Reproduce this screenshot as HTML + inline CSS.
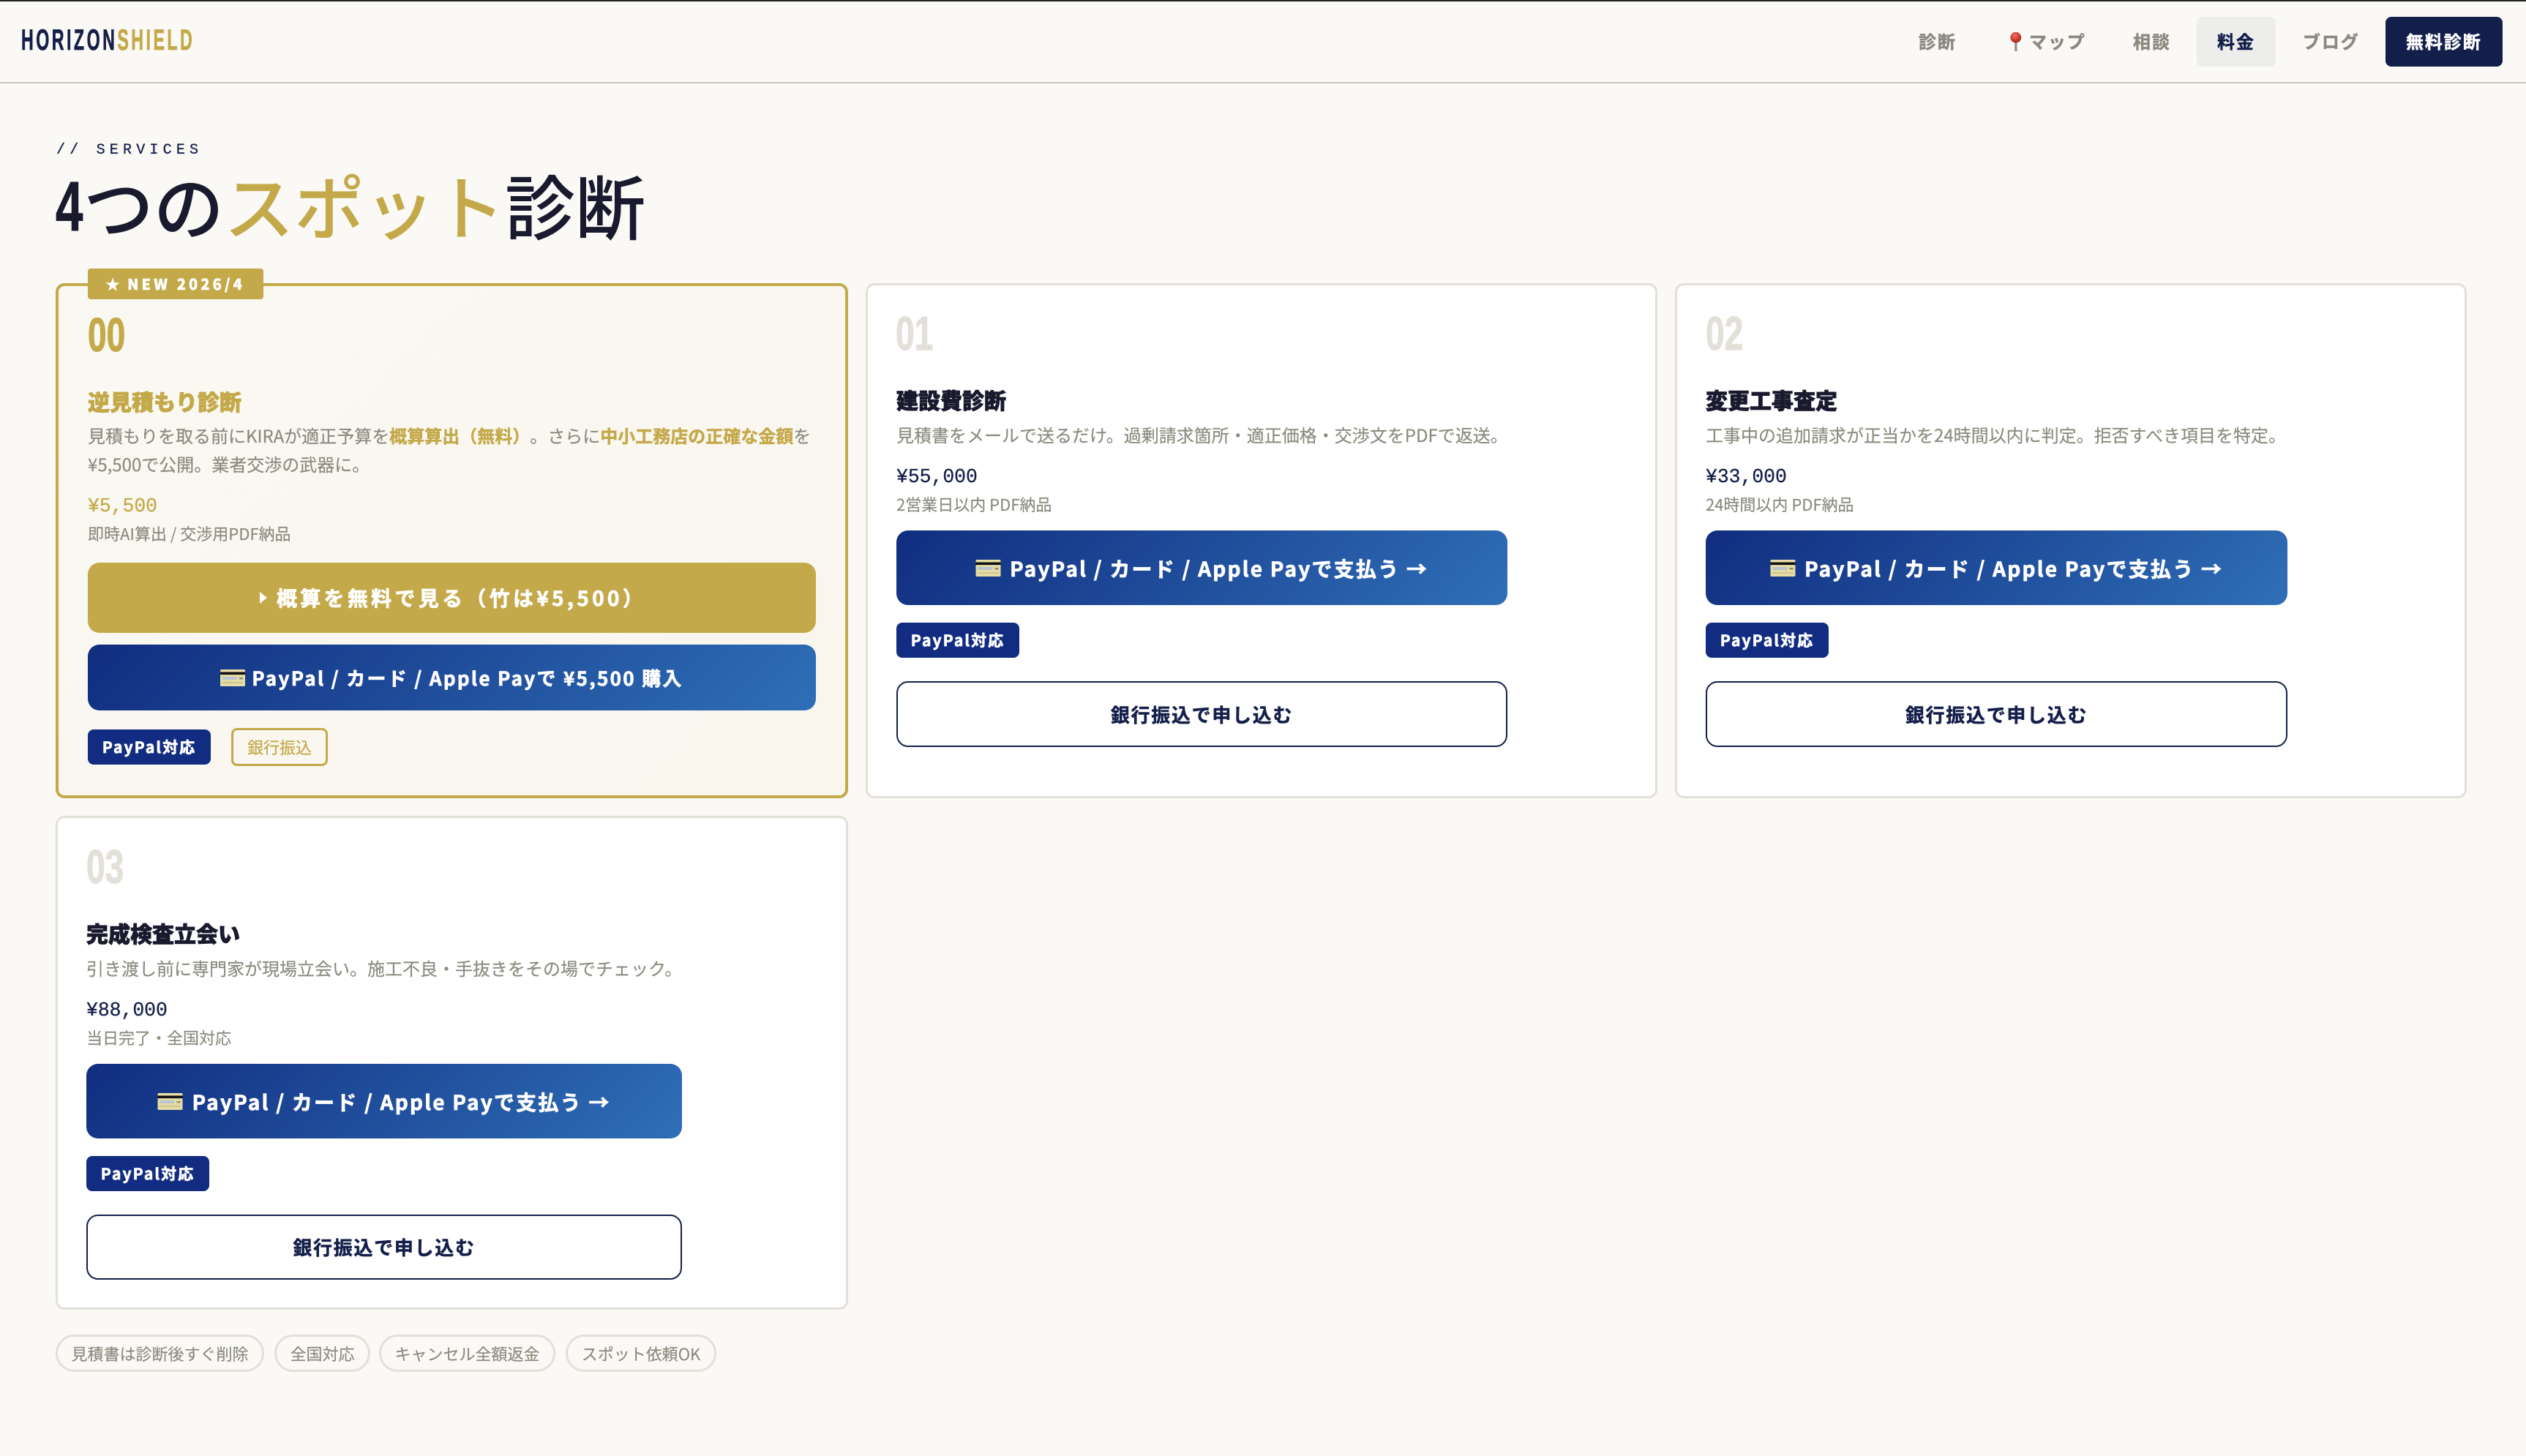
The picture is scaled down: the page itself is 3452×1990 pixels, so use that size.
<!DOCTYPE html>
<html lang="ja">
<head>
<meta charset="utf-8">
<title>HORIZON SHIELD</title>
<style>
html,body{margin:0;padding:0;width:3452px;height:1990px;overflow:hidden;background:#faf9f5}
body{position:relative;font-family:"Noto Sans CJK JP","Liberation Sans",sans-serif;color:#1a1a2e;text-spacing-trim:space-all}
.a{position:absolute;white-space:nowrap}
.box{position:absolute;box-sizing:border-box}
.nav{font-size:24px;font-weight:700;letter-spacing:1.9px;color:#8a8a80;line-height:36px;top:38px;-webkit-text-stroke:.5px currentColor}
.card{background:#fff;border:3px solid #e2e0d8;border-radius:12px}
.num{font-family:"Liberation Sans",sans-serif;font-weight:700;font-size:65px;line-height:70px;transform-origin:0 0;transform:scaleX(.71);color:#e2e0d8;-webkit-text-stroke:1.2px currentColor}
.h3{font-size:30px;font-weight:900;line-height:44px;color:#1a1a2e;-webkit-text-stroke:.8px currentColor}
.desc{font-size:24px;line-height:38px;color:#8a8a7e;-webkit-text-stroke:.15px currentColor}
.desc b{color:#c4a94a;font-weight:700;-webkit-text-stroke:.4px currentColor}
.price{font-family:"Liberation Mono",monospace;font-size:26.4px;line-height:36px;color:#141f4a;-webkit-text-stroke:.3px currentColor}
.note{font-size:22px;line-height:32px;color:#8a8a7e;-webkit-text-stroke:.15px currentColor}
.btn{position:absolute;box-sizing:border-box;display:flex;align-items:center;justify-content:center;white-space:nowrap;border-radius:16px;font-weight:700}
.blue{background:linear-gradient(135deg,#112d80,#2f6fb7);color:#fff;font-size:28px;letter-spacing:2.2px;-webkit-text-stroke:.7px #fff;padding-top:2px}
.blue svg{margin-top:-2px}
.bank{background:#fff;border:2px solid #141f4a;color:#141f4a;font-size:26px;letter-spacing:1.7px;-webkit-text-stroke:.5px #141f4a}
.pp{position:absolute;background:#122c82;color:#fff;font-size:21px;font-weight:700;letter-spacing:2.1px;border-radius:8px;width:168px;height:48px;display:flex;align-items:center;justify-content:center;white-space:nowrap;-webkit-text-stroke:.7px #fff}
.pill{position:absolute;box-sizing:border-box;top:1824px;height:51px;border:3px solid #e2e0d8;border-radius:26px;font-size:22px;color:#8a8a7e;display:flex;align-items:center;justify-content:center;white-space:nowrap;-webkit-text-stroke:.15px currentColor}
svg{display:block;flex:none}
.ic{margin-right:12px}
</style>
</head>
<body>
<div class="box" style="left:0;top:0;width:3452px;height:2px;background:#222"></div>
<div class="box" style="left:0;top:112px;width:3452px;height:2px;background:#c8c8b8"></div>

<div class="a" style="left:29px;top:32px;font-family:'Liberation Sans',sans-serif;font-weight:700;font-size:40px;line-height:46px;letter-spacing:6px;transform-origin:0 0;transform:scaleX(.58);color:#141f4a;-webkit-text-stroke:.8px currentColor">HORIZON<span style="color:#c4a94a">SHIELD</span></div>

<div class="a nav" style="left:2622px">診断</div>
<svg class="a" style="left:2745px;top:42px" width="20" height="30" viewBox="0 0 20 30"><defs><radialGradient id="pg" cx=".42" cy=".32" r=".7"><stop offset="0" stop-color="#ee7060"/><stop offset=".6" stop-color="#cf3b30"/><stop offset="1" stop-color="#a02a22"/></radialGradient></defs><rect x="8.4" y="14" width="3" height="14" fill="#8d8b84"/><circle cx="9.8" cy="9.2" r="7.4" fill="url(#pg)"/></svg>
<div class="a nav" style="left:2773px">マップ</div>
<div class="a nav" style="left:2915px">相談</div>
<div class="box" style="left:3002px;top:23px;width:108px;height:68px;background:#ededeb;border-radius:8px"></div>
<div class="a nav" style="left:3030px;color:#141f4a">料金</div>
<div class="a nav" style="left:3147px">ブログ</div>
<div class="box" style="left:3260px;top:23px;width:160px;height:68px;background:#131f4a;border-radius:8px"></div>
<div class="a nav" style="left:3288px;color:#fff">無料診断</div>

<div class="a" style="left:77px;top:192px;font-family:'Liberation Mono',monospace;font-size:20px;line-height:28px;letter-spacing:6.2px;color:#141f4a;-webkit-text-stroke:.3px currentColor">// SERVICES</div>
<div class="a" style="left:76px;top:211px;font-family:'Liberation Sans',sans-serif;font-weight:700;font-size:96px;line-height:144px;transform-origin:0 0;transform:scaleX(.7);color:#1a1a2e;-webkit-text-stroke:1px currentColor">4</div>
<div class="a" style="left:114px;top:207px;font-size:96px;font-weight:500;line-height:144px;color:#1a1a2e">つの<span style="color:#c4a94a">スポット</span>診断</div>

<!-- card 00 -->
<div class="box" style="left:76px;top:387px;width:1083px;height:704px;border:4px solid #c4a94a;border-radius:12px;background:linear-gradient(135deg,#f9f8f2,#f9f6ee)"></div>
<div class="box" style="left:120px;top:367px;width:240px;height:42px;background:#c4a94a;border-radius:4px"></div>
<div class="a" style="left:144px;top:373px;font-weight:900;font-size:20px;line-height:30px;letter-spacing:4.1px;color:#fff;-webkit-text-stroke:.4px #fff"><span style="letter-spacing:1.5px;-webkit-text-stroke:0">★</span>&nbsp;NEW 2026/4</div>
<div class="a num" style="left:120px;top:423px;color:#c4a94a">00</div>
<div class="a h3" style="left:120px;top:526px;color:#c4a94a">逆見積もり診断</div>
<div class="a desc" style="left:120px;top:576px">見積もりを取る前にKIRAが適正予算を<b>概算算出（無料）</b>。さらに<b>中小工務店の正確な金額</b>を</div>
<div class="a desc" style="left:120px;top:615px">¥5,500で公開。業者交渉の武器に。</div>
<div class="a price" style="left:120px;top:674px;color:#c4a94a">¥5,500</div>
<div class="a note" style="left:120px;top:713px">即時AI算出 / 交渉用PDF納品</div>
<div class="btn" style="left:120px;top:769px;width:995px;height:96px;background:#c4a94a;color:#fff;font-size:28px;letter-spacing:4.3px;-webkit-text-stroke:.7px #fff;padding-left:3px"><svg style="margin-right:13px" width="10" height="16" viewBox="0 0 10 16"><path d="M0 0L10 8L0 16Z" fill="#fff"/></svg>概算を無料で見る（竹は¥5,500）</div>
<div class="btn blue" style="left:120px;top:881px;width:995px;height:90px;font-size:26px;letter-spacing:2.3px;padding-top:0"><svg class="ic" style="margin-right:9px;margin-top:0" width="34" height="23" viewBox="0 0 34 23"><rect width="34" height="23" rx="1.5" fill="#e6dca6"/><rect y="3.5" width="34" height="3.6" fill="#111"/><rect x="3" y="10" width="20" height="4" fill="#b9c4cf"/><rect x="26" y="11" width="5" height="2.4" fill="#8f8a70"/><rect x="3" y="17" width="28" height="2" fill="#cfc592"/></svg>PayPal / カード / Apple Payで ¥5,500 購入</div>
<div class="pp" style="left:120px;top:997px">PayPal対応</div>
<div class="box" style="left:316px;top:995px;width:132px;height:52px;border:3px solid #c4a94a;border-radius:8px;color:#c4a94a;font-size:22px;display:flex;align-items:center;justify-content:center;white-space:nowrap;-webkit-text-stroke:.25px currentColor">銀行振込</div>

<!-- card 01 -->
<div class="box card" style="left:1183px;top:387px;width:1082px;height:704px"></div>
<div class="a num" style="left:1224px;top:421px">01</div>
<div class="a h3" style="left:1225px;top:524px">建設費診断</div>
<div class="a desc" style="left:1225px;top:575px">見積書をメールで送るだけ。過剰請求箇所・適正価格・交渉文をPDFで返送。</div>
<div class="a price" style="left:1225px;top:634px">¥55,000</div>
<div class="a note" style="left:1225px;top:673px">2営業日以内 PDF納品</div>
<div class="btn blue" style="left:1225px;top:725px;width:835px;height:102px"><svg class="ic" width="35" height="23" viewBox="0 0 34 23"><rect width="34" height="23" rx="1.5" fill="#e6dca6"/><rect y="3.5" width="34" height="3.6" fill="#111"/><rect x="3" y="10" width="20" height="4" fill="#b9c4cf"/><rect x="26" y="11" width="5" height="2.4" fill="#8f8a70"/><rect x="3" y="17" width="28" height="2" fill="#cfc592"/></svg>PayPal / カード / Apple Payで支払う →</div>
<div class="pp" style="left:1225px;top:851px">PayPal対応</div>
<div class="btn bank" style="left:1225px;top:931px;width:835px;height:90px">銀行振込で申し込む</div>

<!-- card 02 -->
<div class="box card" style="left:2289px;top:387px;width:1082px;height:704px"></div>
<div class="a num" style="left:2331px;top:421px">02</div>
<div class="a h3" style="left:2331px;top:524px">変更工事査定</div>
<div class="a desc" style="left:2331px;top:575px">工事中の追加請求が正当かを24時間以内に判定。拒否すべき項目を特定。</div>
<div class="a price" style="left:2331px;top:634px">¥33,000</div>
<div class="a note" style="left:2331px;top:673px">24時間以内 PDF納品</div>
<div class="btn blue" style="left:2331px;top:725px;width:795px;height:102px"><svg class="ic" width="35" height="23" viewBox="0 0 34 23"><rect width="34" height="23" rx="1.5" fill="#e6dca6"/><rect y="3.5" width="34" height="3.6" fill="#111"/><rect x="3" y="10" width="20" height="4" fill="#b9c4cf"/><rect x="26" y="11" width="5" height="2.4" fill="#8f8a70"/><rect x="3" y="17" width="28" height="2" fill="#cfc592"/></svg>PayPal / カード / Apple Payで支払う →</div>
<div class="pp" style="left:2331px;top:851px">PayPal対応</div>
<div class="btn bank" style="left:2331px;top:931px;width:795px;height:90px">銀行振込で申し込む</div>

<!-- card 03 -->
<div class="box card" style="left:76px;top:1115px;width:1083px;height:675px"></div>
<div class="a num" style="left:118px;top:1150px">03</div>
<div class="a h3" style="left:118px;top:1253px">完成検査立会い</div>
<div class="a desc" style="left:118px;top:1304px">引き渡し前に専門家が現場立会い。施工不良・手抜きをその場でチェック。</div>
<div class="a price" style="left:118px;top:1363px">¥88,000</div>
<div class="a note" style="left:118px;top:1402px">当日完了・全国対応</div>
<div class="btn blue" style="left:118px;top:1454px;width:814px;height:102px"><svg class="ic" width="35" height="23" viewBox="0 0 34 23"><rect width="34" height="23" rx="1.5" fill="#e6dca6"/><rect y="3.5" width="34" height="3.6" fill="#111"/><rect x="3" y="10" width="20" height="4" fill="#b9c4cf"/><rect x="26" y="11" width="5" height="2.4" fill="#8f8a70"/><rect x="3" y="17" width="28" height="2" fill="#cfc592"/></svg>PayPal / カード / Apple Payで支払う →</div>
<div class="pp" style="left:118px;top:1580px">PayPal対応</div>
<div class="btn bank" style="left:118px;top:1660px;width:814px;height:89px">銀行振込で申し込む</div>

<!-- pills -->
<div class="pill" style="left:76px;width:285px">見積書は診断後すぐ削除</div>
<div class="pill" style="left:375px;width:131px">全国対応</div>
<div class="pill" style="left:518px;width:241px">キャンセル全額返金</div>
<div class="pill" style="left:773px;width:206px">スポット依頼OK</div>
</body>
</html>
